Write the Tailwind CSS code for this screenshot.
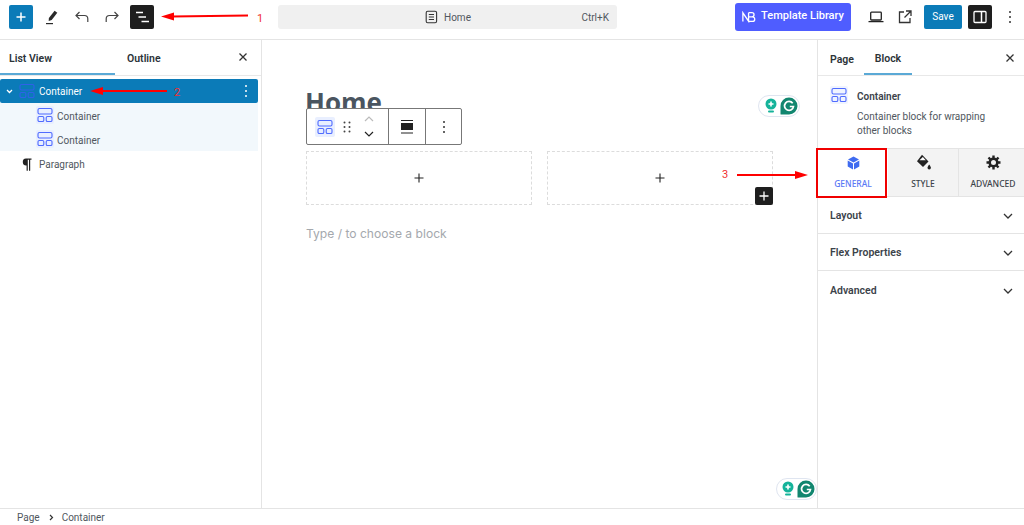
<!DOCTYPE html>
<html lang="en">
<head>
  <meta charset="UTF-8" />
  <meta name="viewport" content="width=device-width, initial-scale=1" />
  <title>Home - Editor</title>
  <script src="https://cdn.jsdelivr.net/npm/@tailwindcss/browser@4"></script>
</head>
<body class="bg-white font-['Roboto',sans-serif] text-[#3c434a]">
  <div class="relative w-[1024px] h-[525px] overflow-hidden flex flex-col">

    <!-- Top bar -->
    <header class="h-10 shrink-0 border-b border-[#e4e4e4] pb-[6px] flex items-center">
      <div class="flex items-center w-[278px] pl-[9px]">
        <button class="w-6 h-6 rounded-[2px] bg-[#0b7bb8] flex items-center justify-center">
          <svg width="12" height="12" viewBox="0 0 12 12" fill="none" stroke="white" stroke-width="1.500"><path d="M6 1.500v9M1.500 6h9"/></svg>
        </button>
        <svg class="ml-[11px]" width="16" height="16" viewBox="0 0 16 16" fill="#2a2a2a"><path d="M10.600 1.800l2.700 2-5.600 7.200-3 1.100.2-3.100z"/><rect x="2" y="14" width="7" height="1.200"/></svg>
        <svg class="ml-[13px]" width="18" height="16" viewBox="0 0 18 16" fill="none" stroke="#444" stroke-width="1.200"><path d="M6.500 3L3 6.500 6.500 10M3 6.500h8.500c2.200 0 3.300 1.400 3.300 3.200V13"/></svg>
        <svg class="ml-[12px]" width="18" height="16" viewBox="0 0 18 16" fill="none" stroke="#444" stroke-width="1.200"><path d="M11.500 3L15 6.500 11.500 10M15 6.500H6.500C4.300 6.500 3.200 7.900 3.200 9.700V13"/></svg>
        <button class="ml-[9px] w-6 h-6 rounded-[2px] bg-[#1e1e1e] flex items-center justify-center">
          <svg width="16" height="14" viewBox="0 0 16 14" fill="none" stroke="white" stroke-width="1.500"><path d="M2 2.500h7M4.500 7H12M7.500 11.500H15"/></svg>
        </button>
      </div>
      <div class="w-[339px] h-6 rounded-[3px] bg-[#f0f0f0] relative flex items-center justify-center text-[10px] text-[#50575e]">
        <span class="flex items-center gap-[6px] ml-[1px] pt-[1px]">
          <svg width="13" height="14" viewBox="0 0 13 14" fill="none" stroke="#333" stroke-width="1.100"><rect x="1.200" y="1.200" width="10.400" height="11.600" rx="1.500"/><path d="M3.800 4.500h5.200M3.800 7h5.200M3.800 9.500h5.200"/></svg>
          Home
        </span>
        <span class="absolute right-2 pt-[1px]">Ctrl+K</span>
      </div>
      <button class="ml-[118px] w-[116px] h-[28px] rounded-[3px] bg-[#4f5dff] text-white text-[11px] font-medium flex items-center justify-center gap-[5px]">
        <svg width="14" height="12" viewBox="0 0 16 12" fill="none" stroke="white" stroke-width="1.500"><path d="M1 11V1.200l6.500 9.600V1M7.500 1h3.800a2.400 2.400 0 0 1 0 4.900H8M8 5.900h4a2.500 2.500 0 0 1 0 5.100H7.500"/></svg>
        Template Library
      </button>
      <svg class="ml-[17px]" width="16" height="12" viewBox="0 0 16 12" fill="none" stroke="#222" stroke-width="1.300"><rect x="2.700" y="1.200" width="10.600" height="7.800" rx=".8"/><path d="M.5 10.600h15"/></svg>
      <svg class="ml-[14px]" width="14" height="14" viewBox="0 0 14 14" fill="none" stroke="#333" stroke-width="1.300"><path d="M6 2H1.500v10.500h10.500V8M8 1h5v5M13 1L6.500 7.500"/></svg>
      <button class="ml-[12px] w-[38px] h-6 rounded-[2px] bg-[#0b7bb8] text-white text-[10px]">Save</button>
      <button class="ml-[6px] w-6 h-6 rounded-[2px] bg-[#1e1e1e] flex items-center justify-center">
        <svg width="14" height="14" viewBox="0 0 14 14" fill="none" stroke="white" stroke-width="1.300"><rect x="1" y="1.500" width="12" height="11" rx="1"/><path d="M8.500 1.500v11" stroke-width="1.500"/></svg>
      </button>
      <svg class="ml-[16px]" width="4" height="14" viewBox="0 0 4 14" fill="#333"><circle cx="2" cy="2" r="1"/><circle cx="2" cy="7" r="1"/><circle cx="2" cy="12" r="1"/></svg>
    </header>

    <div class="flex flex-1 min-h-0">
      <!-- List view -->
      <aside class="w-[262px] shrink-0 border-r border-[#e4e4e4]">
        <div class="h-[36px] flex items-center relative border-b border-[#e8e8e8] text-[10.500px] font-semibold text-[#2c3338]">
          <div class="w-[115px] h-full pl-[9px] pt-[5px] flex items-center border-b-2 border-[#5aa9d6]">List View</div>
          <div class="pl-[12px] pt-[3px]">Outline</div>
          <svg class="absolute left-[238px] top-[12px]" width="10" height="10" viewBox="0 0 10 10" stroke="#333" stroke-width="1.300"><path d="M1.500 1.500l7 7M8.500 1.500l-7 7"/></svg>
        </div>
        <div class="pt-[3px] pr-[3px] text-[10px]">
          <div class="h-6 rounded-[2px] bg-[#0b7bb8] text-white flex items-center relative">
            <svg class="ml-[6px]" width="7" height="5" viewBox="0 0 7 5" fill="none" stroke="white" stroke-width="1.300"><path d="M1 1l2.500 2.500L6 1"/></svg>
            <svg class="ml-[6px]" width="16" height="16" viewBox="0 0 16 16" fill="none" stroke="#2f62e8" stroke-width="1.100"><rect x="1" y="1.500" width="14" height="5.500" rx="1.500"/><rect x="1" y="9.500" width="5.800" height="5" rx="1.300"/><rect x="9.200" y="9.500" width="5.800" height="5" rx="1.300"/></svg>
            <span class="ml-[4px]">Container</span>
            <svg class="absolute left-[244px] top-[5px]" width="4" height="14" viewBox="0 0 4 14" fill="white"><circle cx="2" cy="2" r="1"/><circle cx="2" cy="7" r="1"/><circle cx="2" cy="12" r="1"/></svg>
          </div>
          <div class="bg-[#f2f8fc]">
            <div class="h-6 flex items-center pl-[36px] gap-[3px] text-[#50575e]">
              <span class="w-[18px] h-[18px] bg-[#e9efff] rounded-[2px] flex items-center justify-center">
                <svg width="16" height="16" viewBox="0 0 16 16" fill="none" stroke="#4f6bff" stroke-width="1.100"><rect x="1" y="1.500" width="14" height="5.500" rx="1.500"/><rect x="1" y="9.500" width="5.800" height="5" rx="1.300"/><rect x="9.200" y="9.500" width="5.800" height="5" rx="1.300"/></svg>
              </span>
              <span class="pt-[3px]">Container</span>
            </div>
            <div class="h-6 flex items-center pl-[36px] gap-[3px] text-[#50575e]">
              <span class="w-[18px] h-[18px] bg-[#e9efff] rounded-[2px] flex items-center justify-center">
                <svg width="16" height="16" viewBox="0 0 16 16" fill="none" stroke="#4f6bff" stroke-width="1.100"><rect x="1" y="1.500" width="14" height="5.500" rx="1.500"/><rect x="1" y="9.500" width="5.800" height="5" rx="1.300"/><rect x="9.200" y="9.500" width="5.800" height="5" rx="1.300"/></svg>
              </span>
              <span class="pt-[3px]">Container</span>
            </div>
          </div>
          <div class="h-6 mt-[1px] flex items-center text-[#50575e]">
            <svg class="ml-[22px] mr-[7px]" width="10" height="13" viewBox="0 0 10 13" fill="#222"><path d="M4 .5h5.500v1.200H8.200v11H7V1.700H5.800v11H4.600V7.500A3.500 3.500 0 0 1 4 .5z"/></svg>
            Paragraph
          </div>
        </div>
      </aside>

      <!-- Canvas -->
      <main class="flex-1 relative px-[44px]">
        <h1 class="h-[111px] pt-[45px] -ml-[1px] text-[26px] leading-[34px] font-bold text-[#4a5560] font-['Open_Sans',sans-serif]">Home</h1>

        <!-- Block toolbar -->
        <div class="absolute left-[44px] top-[68px] w-[156px] h-[37px] bg-white border border-[#777] rounded-[2px] flex items-center">
          <div class="w-[82px] h-full flex items-center border-r border-[#777]">
            <span class="ml-[8px] w-[20px] h-[20px] bg-[#e9efff] rounded-[2px] flex items-center justify-center">
              <svg width="16" height="16" viewBox="0 0 16 16" fill="none" stroke="#4f6bff" stroke-width="1.100"><rect x="1" y="1.500" width="14" height="5.500" rx="1.500"/><rect x="1" y="9.500" width="5.800" height="5" rx="1.300"/><rect x="9.200" y="9.500" width="5.800" height="5" rx="1.300"/></svg>
            </span>
            <svg class="ml-[8px]" width="8" height="12" viewBox="0 0 8 12" fill="#444"><circle cx="1.500" cy="1.500" r="1"/><circle cx="6.500" cy="1.500" r="1"/><circle cx="1.500" cy="6" r="1"/><circle cx="6.500" cy="6" r="1"/><circle cx="1.500" cy="10.500" r="1"/><circle cx="6.500" cy="10.500" r="1"/></svg>
            <svg class="ml-[13px]" width="10" height="24" viewBox="0 0 10 24" fill="none" stroke-width="1.200"><path d="M1 6l4-4 4 4" stroke="#bbb"/><path d="M1 18l4 4 4-4" stroke="#222" transform="translate(0 -1)"/></svg>
          </div>
          <div class="w-[37px] h-full flex items-center justify-center border-r border-[#777]">
            <svg width="12" height="14" viewBox="0 0 12 14" fill="#222"><rect y="0" width="12" height="1"/><rect y="3" width="12" height="7"/><rect y="12.500" width="12" height="1"/></svg>
          </div>
          <div class="flex-1 flex items-center justify-center">
            <svg width="4" height="14" viewBox="0 0 4 14" fill="#333"><circle cx="2" cy="2" r="1"/><circle cx="2" cy="7" r="1"/><circle cx="2" cy="12" r="1"/></svg>
          </div>
        </div>

        <!-- Grammarly -->
        <div class="absolute left-[496px] top-[55px] w-[42px] h-[22px] rounded-[11px] bg-white border border-[#dfe5f0] flex items-center justify-end gap-[2px] pr-[1px]">
          <svg width="14" height="16" viewBox="0 0 14 16"><circle cx="7" cy="6" r="5.500" fill="#15b39a"/><path d="M7 3.500v5M4.500 6h5" stroke="white" stroke-width="1.600"/><rect x="4" y="12.500" width="6" height="2" rx="1" fill="#15b39a"/></svg>
          <svg width="18" height="18" viewBox="0 0 18 18"><path d="M9 .5a8.500 8.500 0 1 1 0 17H1a.5.5 0 0 1-.5-.5V9A8.500 8.500 0 0 1 9 .5z" fill="#11866f"/><path d="M12.700 6.300A4.500 4.500 0 1 0 13.500 9.500H9.800" fill="none" stroke="white" stroke-width="1.700"/></svg>
        </div>

        <div class="grid grid-cols-2 gap-[15px]">
          <div class="h-[54px] border border-dashed border-[#dcdcdc] flex items-center justify-center">
            <svg width="10" height="10" viewBox="0 0 10 10" stroke="#222" stroke-width="1.100"><path d="M5 .5v9M.5 5h9"/></svg>
          </div>
          <div class="relative h-[54px] border border-dashed border-[#dcdcdc] flex items-center justify-center">
            <svg width="10" height="10" viewBox="0 0 10 10" stroke="#222" stroke-width="1.100"><path d="M5 .5v9M.5 5h9"/></svg>
            <span class="absolute right-[-1px] bottom-[-1px] w-[18px] h-[18px] rounded-[2px] bg-[#1e1e1e] flex items-center justify-center">
              <svg width="10" height="10" viewBox="0 0 10 10" stroke="white" stroke-width="1.300"><path d="M5 .5v9M.5 5h9"/></svg>
            </span>
          </div>
        </div>
        <p class="mt-[19px] text-[12.100px] leading-[20px] text-[#a4a8ad] font-['Inter',sans-serif]">Type / to choose a block</p>

        <div class="absolute left-[514px] top-[438px] w-[41px] h-[22px] rounded-[11px] bg-white border border-[#dfe5f0] flex items-center justify-end gap-[2px] pr-[1px]">
          <svg width="14" height="16" viewBox="0 0 14 16"><circle cx="7" cy="6" r="5.500" fill="#15b39a"/><path d="M7 3.500v5M4.500 6h5" stroke="white" stroke-width="1.600"/><rect x="4" y="12.500" width="6" height="2" rx="1" fill="#15b39a"/></svg>
          <svg width="18" height="18" viewBox="0 0 18 18"><path d="M9 .5a8.500 8.500 0 1 1 0 17H1a.5.5 0 0 1-.5-.5V9A8.500 8.500 0 0 1 9 .5z" fill="#11866f"/><path d="M12.700 6.300A4.500 4.500 0 1 0 13.500 9.500H9.800" fill="none" stroke="white" stroke-width="1.700"/></svg>
        </div>
      </main>

      <!-- Settings sidebar -->
      <aside class="w-[207px] shrink-0 border-l border-[#e4e4e4]">
        <div class="h-[36px] relative flex items-center border-b border-[#e8e8e8] text-[10.500px] font-semibold text-[#2c3338]">
          <div class="w-[46px] h-full flex items-center pl-[12px] pt-[5px]">Page</div>
          <div class="w-[48px] h-full flex items-center justify-center pt-[5px] border-b-2 border-[#5aa9d6]">Block</div>
          <svg class="absolute right-[9px] top-[13px]" width="10" height="10" viewBox="0 0 10 10" stroke="#333" stroke-width="1.300"><path d="M1.500 1.500l7 7M8.500 1.500l-7 7"/></svg>
        </div>
        <div class="h-[72px] flex pl-[12px] pt-[10px]">
          <span class="w-[18px] h-[18px] bg-[#f0f4ff] rounded-[2px] flex items-center justify-center">
            <svg width="16" height="16" viewBox="0 0 16 16" fill="none" stroke="#4f6bff" stroke-width="1.100"><rect x="1" y="1.500" width="14" height="5.500" rx="1.500"/><rect x="1" y="9.500" width="5.800" height="5" rx="1.300"/><rect x="9.200" y="9.500" width="5.800" height="5" rx="1.300"/></svg>
          </span>
          <div class="ml-[9px] w-[150px] pt-[4px]">
            <div class="text-[10px] leading-[14px] font-semibold text-[#3c434a]">Container</div>
            <p class="mt-[6px] text-[10px] leading-[14px] text-[#50575e]">Container block for wrapping other blocks</p>
          </div>
        </div>
        <div class="h-[49px] flex bg-[#f3f3f3] border-y border-[#e4e4e4] font-['Noto_Sans',sans-serif] text-[8.500px] font-medium text-[#3c434a]">
          <div class="w-[70px] bg-white flex flex-col items-center pt-[7px] text-[#5b78f5]">
            <svg width="13" height="14" viewBox="0 0 13 14" fill="#3f6bf0"><path d="M6.500.5l5.500 3-5.500 3L1 3.500z"/><path d="M.7 4.600l5.300 2.900v6L.7 10.500zM12.300 4.600L7 7.500v6l5.300-3z"/></svg>
            <span class="mt-[8px]">GENERAL</span>
          </div>
          <div class="w-[71px] border-r border-[#e4e4e4] flex flex-col items-center pt-[5px]">
            <svg class="ml-[2px]" width="16" height="17" viewBox="0 0 16 17" fill="#222"><path d="M6 .8l1 1 5.500 5.700-5.500 5.500L1 7.200z"/><path d="M3.500 6.200L6.800 3l3 3.200z" fill="white"/><path d="M13.200 10.500c1.100 1.600 1.700 2.500 1.700 3.300a1.700 1.700 0 0 1-3.400 0c0-.8.600-1.700 1.700-3.300z"/></svg>
            <span class="mt-[7px]">STYLE</span>
          </div>
          <div class="flex-1 flex flex-col items-center pt-[6px] pl-[3px]">
            <svg width="15" height="15" viewBox="0 0 15 15" fill="none" stroke="#222"><circle cx="7.500" cy="7.500" r="3.800" stroke-width="2.600"/><path d="M7.500 .5v2.500M7.500 12v2.500M.5 7.500H3M12 7.500h2.500M2.500 2.500l1.800 1.800M10.700 10.700l1.800 1.800M12.500 2.500l-1.800 1.800M4.300 10.700l-1.800 1.800" stroke-width="2.400"/></svg>
            <span class="mt-[8px]">ADVANCED</span>
          </div>
        </div>
        <div class="h-[37px] flex items-center justify-between pl-[12px] pr-[11px] pt-[2px] border-b border-[#e4e4e4] text-[10.500px] font-semibold">
          Layout
          <svg width="10" height="6" viewBox="0 0 10 6" fill="none" stroke="#333" stroke-width="1.300"><path d="M1 1l4 4 4-4"/></svg>
        </div>
        <div class="h-[37px] flex items-center justify-between pl-[12px] pr-[11px] pt-[2px] border-b border-[#e4e4e4] text-[10.500px] font-semibold">
          Flex Properties
          <svg width="10" height="6" viewBox="0 0 10 6" fill="none" stroke="#333" stroke-width="1.300"><path d="M1 1l4 4 4-4"/></svg>
        </div>
        <div class="h-[37px] flex items-center justify-between pl-[12px] pr-[11px] pt-[2px] text-[10.500px] font-semibold">
          Advanced
          <svg width="10" height="6" viewBox="0 0 10 6" fill="none" stroke="#333" stroke-width="1.300"><path d="M1 1l4 4 4-4"/></svg>
        </div>
      </aside>
    </div>

    <!-- Breadcrumb -->
    <footer class="h-[17px] shrink-0 border-t border-[#e4e4e4] pl-[17px] flex items-center text-[10px] text-[#50575e]">
      Page
      <svg class="ml-[9px] mr-[8px]" width="5" height="7" viewBox="0 0 5 7" fill="none" stroke="#333" stroke-width="1.200"><path d="M1 1l2.500 2.500L1 6"/></svg>
      Container
    </footer>

    <!-- Annotations -->
    <div class="absolute left-[816px] top-[148px] w-[71px] h-[50px] border-[2px] border-[#f00000]"></div>
    <svg class="absolute left-0 top-0 pointer-events-none" width="1024" height="525" viewBox="0 0 1024 525">
      <path d="M248 15.500L172 16.500" stroke="#f00" stroke-width="2"/><path d="M161 16.500l13-4v8z" fill="#f00"/>
      <path d="M167 91L100 91" stroke="#f00" stroke-width="2"/><path d="M90 91l13-4v8z" fill="#f00"/>
      <path d="M737 175L797 175" stroke="#f00" stroke-width="2"/><path d="M808 175l-13-4v8z" fill="#f00"/>
    </svg>
    <span class="absolute left-[257px] top-[12px] text-[11px] leading-[14px] text-[#f03030]">1</span>
    <span class="absolute left-[174px] top-[86px] text-[11px] leading-[14px] text-[#f03030]">2</span>
    <span class="absolute left-[722px] top-[168px] text-[11px] leading-[14px] text-[#f03030]">3</span>
  </div>
</body>
</html>
